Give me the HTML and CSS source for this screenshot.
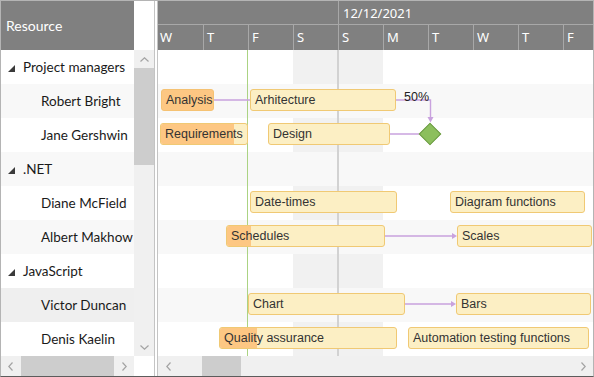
FILE: index.html
```html
<!DOCTYPE html>
<html lang="en">
<head>
    <meta charset="UTF-8">
    <title>Resource Gantt</title>
    <link rel="stylesheet" href="styles.css">
</head>
<body>
    <div class="gantt">
        <!-- resource grid -->
        <div class="grid-pane">
            <div class="grid-header">Resource</div>
            <div class="grid-header-gap"></div>
            <div class="grid-rows">
                <div class="grid-row group"><svg class="toggle" width="7" height="7" viewBox="0 0 7 7"><polygon points="7,0 7,7 0,7"/></svg>Project managers</div>
                <div class="grid-row child alt">Robert Bright</div>
                <div class="grid-row child">Jane Gershwin</div>
                <div class="grid-row group alt"><svg class="toggle" width="7" height="7" viewBox="0 0 7 7"><polygon points="7,0 7,7 0,7"/></svg>.NET</div>
                <div class="grid-row child">Diane McField</div>
                <div class="grid-row child alt">Albert Makhow</div>
                <div class="grid-row group"><svg class="toggle" width="7" height="7" viewBox="0 0 7 7"><polygon points="7,0 7,7 0,7"/></svg>JavaScript</div>
                <div class="grid-row child hover">Victor Duncan</div>
                <div class="grid-row child">Denis Kaelin</div>
            </div>
            <div class="vscroll">
                <div class="sb-btn"><svg width="9" height="5" viewBox="0 0 9 5"><polyline points="0.5,4.5 4.5,0.8 8.5,4.5"/></svg></div>
                <div class="vthumb"></div>
                <div class="vtrack"></div>
                <div class="sb-btn"><svg width="9" height="5" viewBox="0 0 9 5"><polyline points="0.5,0.5 4.5,4.2 8.5,0.5"/></svg></div>
            </div>
            <div class="hscroll grid-hscroll">
                <div class="sb-btn h"><svg width="5" height="9" viewBox="0 0 5 9"><polyline points="4.5,0.5 0.8,4.5 4.5,8.5"/></svg></div>
                <div class="hthumb grid-thumb"></div>
                <div class="htrack"></div>
                <div class="sb-btn h"><svg width="5" height="9" viewBox="0 0 5 9"><polyline points="0.5,0.5 4.2,4.5 0.5,8.5"/></svg></div>
            </div>
            <div class="corner"></div>
        </div>

        <div class="splitter"></div>

        <!-- timeline -->
        <div class="chart-pane">
            <div class="chart-header">
                <div class="week-row">
                    <div class="week prev"></div>
                    <div class="week">12/12/2021</div>
                </div>
                <div class="day-row">
                    <div class="day">W</div>
                    <div class="day">T</div>
                    <div class="day">F</div>
                    <div class="day">S</div>
                    <div class="day">S</div>
                    <div class="day">M</div>
                    <div class="day">T</div>
                    <div class="day">W</div>
                    <div class="day">T</div>
                    <div class="day">F</div>
                </div>
            </div>

            <div class="chart-body">
                <div class="chart-row"></div>
                <div class="chart-row alt"></div>
                <div class="chart-row"></div>
                <div class="chart-row alt"></div>
                <div class="chart-row"></div>
                <div class="chart-row alt"></div>
                <div class="chart-row"></div>
                <div class="chart-row alt"></div>
                <div class="chart-row"></div>

                <div class="today-line"></div>
                <div class="week-line"></div>

                <div class="tasks">
                    <svg class="links" width="435" height="306" viewBox="0 0 435 306">
                        <polyline points="56,50 92,50"/>
                        <polyline points="238,50 272.5,50 272.5,70"/>
                        <polyline points="232,84 265,84"/>
                        <polyline points="227,186 295,186"/>
                        <polyline points="247,254 294,254"/>
                        <polygon class="head" points="269.5,67 275.5,67 272.5,72.5"/>
                        <polygon class="head" points="294,183 294,189 299,186"/>
                        <polygon class="head" points="293,251 293,257 298,254"/>
                    </svg>
                    <div class="progress-label">50%</div>

                    <div class="task done" style="left:3px;top:39px;width:53px">Analysis</div>
                    <div class="task" style="left:92px;top:39px;width:146px">Arhitecture</div>
                    <div class="task" style="left:2px;top:73px;width:88px"><span class="progress" style="width:85%"></span><span class="label">Requirements</span></div>
                    <div class="task" style="left:110px;top:73px;width:122px">Design</div>
                    <div class="milestone"></div>
                    <div class="task" style="left:92px;top:141px;width:147px">Date-times</div>
                    <div class="task" style="left:292px;top:141px;width:135px">Diagram functions</div>
                    <div class="task" style="left:68px;top:175px;width:159px"><span class="progress" style="width:15%"></span><span class="label">Schedules</span></div>
                    <div class="task" style="left:299px;top:175px;width:135px">Scales</div>
                    <div class="task" style="left:90px;top:243px;width:157px">Chart</div>
                    <div class="task" style="left:298px;top:243px;width:135px">Bars</div>
                    <div class="task" style="left:61px;top:277px;width:178px"><span class="progress" style="width:21%"></span><span class="label">Quality assurance</span></div>
                    <div class="task" style="left:250px;top:277px;width:181px">Automation testing functions</div>
                </div>
            </div>

            <div class="hscroll chart-hscroll">
                <div class="sb-btn h"><svg width="5" height="9" viewBox="0 0 5 9"><polyline points="4.5,0.5 0.8,4.5 4.5,8.5"/></svg></div>
                <div class="chart-thumb-gap"></div>
                <div class="hthumb chart-thumb"></div>
                <div class="htrack"></div>
                <div class="sb-btn h"><svg width="5" height="9" viewBox="0 0 5 9"><polyline points="0.5,0.5 4.2,4.5 0.5,8.5"/></svg></div>
            </div>
        </div>
    </div>
</body>
</html>
```

FILE: styles.css
```css
body {
    margin: 0;
    background: #fff;
    font-family: Lato, "Noto Sans", sans-serif;
    color: #1a1a1a;
}

.gantt {
    width: 594px;
    height: 377px;
    box-sizing: border-box;
    border: 1px solid #b4b4b4;
    border-bottom-color: #5c5c5c;
    display: flex;
    overflow: hidden;
}

/* ---------- left grid ---------- */
.grid-pane {
    display: grid;
    grid-template-columns: 133px 20px;
    grid-template-rows: 49px 306px 20px;
}

.grid-header {
    background: #808080;
    color: #fff;
    font-size: 14px;
    line-height: 49px;
    padding-left: 5px;
}

.grid-rows {
    overflow: hidden;
}

.grid-row {
    height: 34px;
    line-height: 35px;
    font-size: 13.5px;
    white-space: nowrap;
}

.grid-row.alt { background: #f8f8f8; }
.grid-row.hover { background: #efefef; }

.grid-row.group { padding-left: 7px; }
.grid-row.child { padding-left: 40px; }

.toggle {
    fill: #3a3a3a;
    margin-right: 8px;
    vertical-align: 0;
}

/* ---------- scrollbars ---------- */
.vscroll {
    display: flex;
    flex-direction: column;
    background: #f0f0f0;
}

.sb-btn {
    height: 18px;
    display: flex;
    align-items: center;
    justify-content: center;
}

.sb-btn.h {
    height: auto;
    width: 20px;
}

.sb-btn svg polyline {
    fill: none;
    stroke: #a3a3a3;
    stroke-width: 1.2;
}

.vthumb {
    height: 97px;
    background: #cdcdcd;
}

.vtrack { flex: 1; }

.hscroll {
    display: flex;
    background: #f0f0f0;
}

.hthumb { background: #cdcdcd; }
.htrack { flex: 1; }

.grid-thumb { width: 94px; }

.corner { background: #fff; }

.splitter {
    width: 2px;
    flex: none;
    border-left: 1px solid #c4c4c4;
    border-right: 1px solid #c4c4c4;
    background: #fff;
}

/* ---------- chart ---------- */
.chart-pane {
    flex: 1;
    display: flex;
    flex-direction: column;
    min-width: 0;
    font-family: "Noto Sans", sans-serif;
}

.chart-header {
    height: 49px;
    background: #808080;
    color: #fff;
    overflow: hidden;
}

.week-row {
    height: 23px;
    border-bottom: 1px solid #a8a8a8;
    display: flex;
}

.week {
    flex: none;
    width: 315px;
    box-sizing: border-box;
    border-left: 1px solid #a8a8a8;
    font-size: 13px;
    line-height: 24px;
    padding-left: 4px;
    white-space: nowrap;
}

.week.prev {
    width: 180px;
    border-left: none;
}

.day-row {
    height: 25px;
    display: flex;
}

.day {
    flex: none;
    width: 45px;
    box-sizing: border-box;
    border-left: 1px solid #a8a8a8;
    font-size: 13px;
    line-height: 25px;
    padding-left: 3px;
}

.day:first-child {
    border-left: none;
    padding-left: 2px;
}

.chart-body {
    position: relative;
    height: 306px;
    overflow: hidden;
}

.chart-row {
    height: 34px;
    background: linear-gradient(to right, transparent 135px, #f1f1f1 135px, #f1f1f1 225px, transparent 225px);
}

.chart-row.alt { background: #f8f8f8; }

.today-line {
    position: absolute;
    left: 89px;
    top: 0;
    bottom: 0;
    width: 1px;
    background: #abd383;
}

.week-line {
    position: absolute;
    left: 179px;
    top: 0;
    bottom: 0;
    width: 2px;
    background: #d2d2d2;
}

.tasks {
    position: absolute;
    inset: 0;
}

.links {
    position: absolute;
    left: 0;
    top: 0;
}

.links polyline {
    fill: none;
    stroke: #c9a2de;
    stroke-width: 1.4;
}

.links .head { fill: #c9a2de; }

.progress-label {
    position: absolute;
    left: 246px;
    top: 40px;
    font-family: "Liberation Sans", Arial, sans-serif;
    font-size: 12.5px;
    color: #222;
}

.task {
    position: absolute;
    height: 22px;
    box-sizing: border-box;
    border: 1px solid #f0c974;
    border-radius: 3px;
    background: #fcefc4;
    font-family: "Liberation Sans", Arial, sans-serif;
    font-size: 12.5px;
    line-height: 21px;
    color: #333;
    padding-left: 4px;
    white-space: nowrap;
    overflow: hidden;
}

.task.done {
    background: #fdc783;
    border-color: #f5c273;
}

.task .progress {
    position: absolute;
    left: 0;
    top: 0;
    bottom: 0;
    background: #fdc783;
}

.task .label { position: relative; }

.milestone {
    position: absolute;
    left: 264px;
    top: 76px;
    width: 16px;
    height: 16px;
    box-sizing: border-box;
    background: #8cbf5d;
    border: 1px solid #6e9c48;
    transform: rotate(45deg);
}

.chart-hscroll { height: 20px; }

.chart-thumb-gap { width: 24px; }
.chart-thumb { width: 39px; }
```
